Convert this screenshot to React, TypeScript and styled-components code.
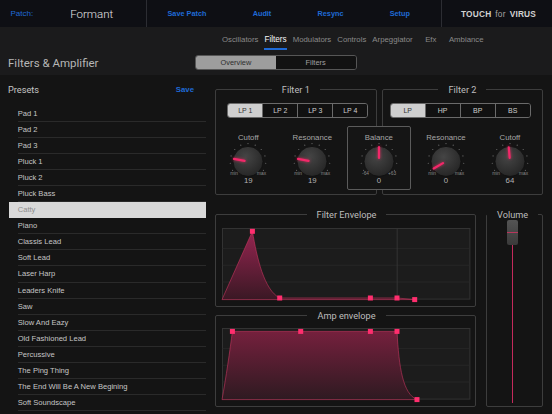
import React, { useId } from 'react';
import styled, { createGlobalStyle } from 'styled-components';

const BLUE = '#1f6ad6';
const PINK = '#f2286a';

const GlobalStyle = createGlobalStyle`
  html, body {
    margin: 0;
    padding: 0;
    background: #141414;
  }
  body {
    width: 552px;
    height: 414px;
    overflow: hidden;
    font-family: 'Liberation Sans', Arial, sans-serif;
  }
  * {
    box-sizing: border-box;
  }
`;

const Screen = styled.div`
  width: 552px;
  height: 414px;
  display: flex;
  flex-direction: column;
  background: #141414;
  overflow: hidden;
`;

const TopBar = styled.header`
  height: 27px;
  flex: none;
  display: flex;
  background: #0e0f14;
`;

const PatchCell = styled.div`
  width: 147px;
  display: flex;
  align-items: center;
  padding-left: 10.5px;
  border-right: 1px solid #2c2d33;
`;

const PatchLabel = styled.span`
  color: ${BLUE};
  font-size: 8px;
`;

const PatchName = styled.span`
  margin-left: 37px;
  color: #e4e4e4;
  font-family: Roboto, 'Liberation Sans', sans-serif;
  font-weight: 300;
  font-size: 11.5px;
`;

const NavCell = styled.nav`
  width: 295px;
  display: flex;
  align-items: center;
  justify-content: space-between;
  padding: 0 31px 0 20.5px;
  border-right: 1px solid #2c2d33;
`;

const NavLink = styled.span`
  color: ${BLUE};
  font-size: 7.3px;
  font-weight: 700;
`;

const LogoCell = styled.div`
  flex: 1;
  display: flex;
  align-items: center;
  padding-left: 19px;
  color: #d2d2d2;
  font-size: 8.3px;
  letter-spacing: 0.2px;
`;

const LogoWord = styled.b`
  font-weight: 700;
`;

const LogoFor = styled.span`
  margin: 0 4px;
  color: #a6a6a6;
`;

const TabBar = styled.div`
  height: 23px;
  flex: none;
  display: flex;
  gap: 6px;
  padding-left: 222px;
  background: #1b1b1c;
`;

const Tab = styled.span<{ $active?: boolean; $spaced?: boolean }>`
  display: flex;
  align-items: center;
  padding-top: 3px;
  margin-left: ${(p) => (p.$spaced ? '6.5px' : '0')};
  border-bottom: 2px solid ${(p) => (p.$active ? BLUE : 'transparent')};
  color: ${(p) => (p.$active ? '#f4f4f4' : '#8a8a8a')};
  font-size: ${(p) => (p.$active ? '8.2px' : '7.8px')};
`;

const HeaderBand = styled.div`
  height: 25px;
  flex: none;
  display: flex;
  align-items: center;
  padding-left: 8px;
  background: #1b1b1c;
`;

const PageTitle = styled.h1`
  width: 187px;
  margin: 0;
  color: #b6b6b6;
  font-family: Roboto, 'Liberation Sans', sans-serif;
  font-weight: 400;
  font-size: 11.5px;
`;

const ViewSwitch = styled.div`
  width: 161.5px;
  height: 15px;
  display: flex;
  border: 1px solid #565656;
  border-radius: 3px;
  overflow: hidden;
`;

const ViewOption = styled.span<{ $active?: boolean }>`
  flex: 1;
  display: flex;
  align-items: center;
  justify-content: center;
  background: ${(p) => (p.$active ? '#9d9d9d' : '#121212')};
  color: ${(p) => (p.$active ? '#2e2e2e' : '#a0a0a0')};
  font-size: 7.4px;
`;

const Body = styled.div`
  flex: 1;
  min-height: 0;
  display: flex;
`;

const PresetsColumn = styled.section`
  width: 210px;
  flex: none;
  display: flex;
  flex-direction: column;
`;

const PresetsHeader = styled.div`
  height: 30.5px;
  flex: none;
  display: flex;
  align-items: center;
  justify-content: space-between;
  padding: 0 16px 2px 8px;
`;

const PresetsTitle = styled.span`
  color: #c4c4c4;
  font-family: Roboto, 'Liberation Sans', sans-serif;
  font-size: 9.2px;
`;

const SaveLink = styled.span`
  color: ${BLUE};
  font-size: 7.8px;
  font-weight: 700;
`;

const PresetList = styled.ul`
  list-style: none;
  margin: 0 0 0 9.3px;
  padding: 0;
  width: 196.4px;
`;

const PresetRow = styled.li<{ $selected?: boolean }>`
  display: flex;
  padding-left: 8.4px;
  background: ${(p) => (p.$selected ? '#d9d9d9' : 'transparent')};
`;

const PresetName = styled.span<{ $selected?: boolean }>`
  flex: 1;
  height: 16.1px;
  line-height: 15.6px;
  border-bottom: 1px solid ${(p) => (p.$selected ? 'transparent' : '#2a2a2a')};
  color: ${(p) => (p.$selected ? '#8e8e8e' : '#c6c6c6')};
  font-size: 7.6px;
  white-space: nowrap;
`;

const Editor = styled.section`
  flex: 1;
  display: flex;
  flex-direction: column;
  padding: 8.5px 8.7px 0 5px;
`;

const FilterRow = styled.div`
  position: relative;
  display: grid;
  grid-template-columns: 1fr 1fr;
  gap: 5px;
`;

const Group = styled.fieldset<{ $pad?: string }>`
  margin: 0;
  min-width: 0;
  padding: ${(p) => p.$pad || '0'};
  border: 1px solid #3d3d3d;
  border-radius: 2px;
`;

const Legend = styled.legend`
  margin: 0 auto;
  padding: 0 10px;
  color: #bdbdbd;
  font-family: Roboto, 'Liberation Sans', sans-serif;
  font-size: 9.2px;
  line-height: 11px;
`;

const ModeBar = styled.div<{ $left: number; $right: number }>`
  height: 15.6px;
  display: flex;
  margin: 8.2px ${(p) => p.$right}px 0 ${(p) => p.$left}px;
  border: 1px solid #6a6a6a;
  border-radius: 3px;
  overflow: hidden;
`;

const ModeButton = styled.span<{ $active?: boolean }>`
  flex: 1;
  display: flex;
  align-items: center;
  justify-content: center;
  background: ${(p) => (p.$active ? '#cfcfcf' : '#111111')};
  color: ${(p) => (p.$active ? '#333333' : '#cdcdcd')};
  font-size: 7px;
  & + & {
    border-left: 1px solid #6a6a6a;
  }
`;

const KnobRow = styled.div<{ $offset: number }>`
  display: flex;
  margin-top: 15px;
  padding: 0 0 8.7px ${(p) => p.$offset}px;
`;

const KnobCell = styled.div`
  width: 64px;
  display: flex;
  flex-direction: column;
  align-items: center;
`;

const KnobLabel = styled.span`
  height: 10px;
  line-height: 10px;
  color: #a6a6a6;
  font-size: 7.8px;
`;

const KnobValue = styled.span`
  height: 8px;
  line-height: 8px;
  color: #b2b2b2;
  font-size: 7.8px;
`;

const DialSvg = styled.svg`
  display: block;
  overflow: visible;
`;

const Pointer = styled.line`
  filter: drop-shadow(0 0 1.4px rgba(255, 40, 100, 0.75));
`;

const BalanceBox = styled.div`
  position: absolute;
  left: 131.7px;
  top: 42.5px;
  width: 64.3px;
  height: 64px;
  display: flex;
  justify-content: center;
  padding-top: 6.3px;
  border: 1px solid #5b5b5b;
  border-radius: 2px;
  background: #151515;
`;

const LowerRow = styled.div`
  display: flex;
  gap: 10px;
  margin-top: 14.2px;
`;

const EnvColumn = styled.div`
  width: 261px;
  display: flex;
  flex-direction: column;
  gap: 2.8px;
`;

const GraphSvg = styled.svg`
  display: block;
  overflow: visible;
`;

const VolumeGroup = styled(Group)`
  width: 57.3px;
  display: flex;
  flex-direction: column;
  align-items: center;
  padding: 0 4px 2.7px 0;
`;

const Handle = styled.div`
  width: 11.4px;
  height: 25.3px;
  flex: none;
  display: flex;
  align-items: center;
  border-radius: 2px;
  background: linear-gradient(#545454, #3a3a3a);
  &::after {
    content: '';
    width: 100%;
    height: 1.2px;
    background: #b8365c;
  }
`;

const Track = styled.div`
  width: 1.6px;
  flex: 1;
  background: #c42a5c;
`;

type DialProps = { angle: number; min?: string; max?: string };

function Dial({ angle, min = 'min', max = 'max' }: DialProps) {
  const gid = useId().replace(/:/g, '');
  const cx = 32;
  const cy = 18.4;
  const rad = ((angle - 90) * Math.PI) / 180;
  const ticks = Array.from({ length: 11 }, (_, i) => -120 + i * 24);
  return (
    <DialSvg width={64} height={34} viewBox="0 0 64 34">
      <defs>
        <radialGradient id={gid} cx="42%" cy="35%" r="70%">
          <stop offset="0%" stopColor="#454545" />
          <stop offset="100%" stopColor="#242424" />
        </radialGradient>
      </defs>
      {ticks.map((t) => {
        const a = ((t - 90) * Math.PI) / 180;
        return <circle key={t} cx={cx + Math.cos(a) * 17.8} cy={cy + Math.sin(a) * 17.8} r={0.6} fill="#6c6c6c" />;
      })}
      <circle cx={cx} cy={cy} r={15} fill={`url(#${gid})`} stroke="#0e0e0e" strokeWidth={0.8} />
      <Pointer
        x1={cx + Math.cos(rad) * 3.5}
        y1={cy + Math.sin(rad) * 3.5}
        x2={cx + Math.cos(rad) * 14.2}
        y2={cy + Math.sin(rad) * 14.2}
        stroke={PINK}
        strokeWidth={2.2}
        strokeLinecap="round"
      />
      <text x={cx - 10} y={32.4} textAnchor="end" fontSize={4.8} fill="#8a8a8a" fontFamily="Liberation Sans, sans-serif">
        {min}
      </text>
      <text x={cx + 9} y={32.4} textAnchor="start" fontSize={4.8} fill="#8a8a8a" fontFamily="Liberation Sans, sans-serif">
        {max}
      </text>
    </DialSvg>
  );
}

type KnobProps = DialProps & { label: string; value: string };

function Knob({ label, value, ...dial }: KnobProps) {
  return (
    <KnobCell>
      <KnobLabel>{label}</KnobLabel>
      <Dial {...dial} />
      <KnobValue>{value}</KnobValue>
    </KnobCell>
  );
}

type EnvelopeProps = { path: string; points: [number, number][]; top: string; bottom: string };

const GW = 248.4;
const GH = 71.6;

function EnvelopeGraph({ path, points, top, bottom }: EnvelopeProps) {
  const gid = useId().replace(/:/g, '');
  return (
    <GraphSvg width={GW} height={GH} viewBox={`0 0 ${GW} ${GH}`}>
      <defs>
        <linearGradient id={gid} x1="0" y1="0" x2="0" y2="1">
          <stop offset="0%" stopColor={top} />
          <stop offset="100%" stopColor={bottom} />
        </linearGradient>
      </defs>
      <rect x={0.5} y={0.5} width={GW - 1} height={GH - 1} fill="#1c1c1c" stroke="#333333" />
      {[20.6, 37.3, 54].map((y) => (
        <line key={y} x1={0.5} x2={GW - 0.5} y1={y} y2={y} stroke="#2a2a2a" strokeWidth={0.8} />
      ))}
      <line x1={175.2} x2={175.2} y1={0.5} y2={GH - 0.5} stroke="#3a3a3a" strokeWidth={0.8} />
      <path d={path} fill={`url(#${gid})`} stroke="#c8345f" strokeWidth={0.7} strokeOpacity={0.85} />
      {points.map(([x, y]) => (
        <rect key={`${x}-${y}`} x={x - 2.5} y={y - 2.5} width={5} height={5} fill="#ff2e6e" />
      ))}
    </GraphSvg>
  );
}

const presets = [
  'Pad 1',
  'Pad 2',
  'Pad 3',
  'Pluck 1',
  'Pluck 2',
  'Pluck Bass',
  'Catty',
  'Piano',
  'Classis Lead',
  'Soft Lead',
  'Laser Harp',
  'Leaders Knife',
  'Saw',
  'Slow And Eazy',
  'Old Fashioned Lead',
  'Percussive',
  'The Ping Thing',
  'The End Will Be A New Begining',
  'Soft Soundscape',
];

const tabs = ['Oscillators', 'Filters', 'Modulators', 'Controls', 'Arpeggiator', 'Efx', 'Ambiance'];

export default function App() {
  return (
    <>
      <GlobalStyle />
      <Screen>
        <TopBar>
          <PatchCell>
            <PatchLabel>Patch:</PatchLabel>
            <PatchName>Formant</PatchName>
          </PatchCell>
          <NavCell>
            {['Save Patch', 'Audit', 'Resync', 'Setup'].map((n) => (
              <NavLink key={n}>{n}</NavLink>
            ))}
          </NavCell>
          <LogoCell>
            <LogoWord>TOUCH</LogoWord>
            <LogoFor>for</LogoFor>
            <LogoWord>VIRUS</LogoWord>
          </LogoCell>
        </TopBar>

        <TabBar>
          {tabs.map((t) => (
            <Tab key={t} $active={t === 'Filters'} $spaced={t === 'Efx' || t === 'Ambiance'}>
              {t}
            </Tab>
          ))}
        </TabBar>

        <HeaderBand>
          <PageTitle>Filters &amp; Amplifier</PageTitle>
          <ViewSwitch>
            <ViewOption $active>Overview</ViewOption>
            <ViewOption>Filters</ViewOption>
          </ViewSwitch>
        </HeaderBand>

        <Body>
          <PresetsColumn>
            <PresetsHeader>
              <PresetsTitle>Presets</PresetsTitle>
              <SaveLink>Save</SaveLink>
            </PresetsHeader>
            <PresetList>
              {presets.map((p) => (
                <PresetRow key={p} $selected={p === 'Catty'}>
                  <PresetName $selected={p === 'Catty'}>{p}</PresetName>
                </PresetRow>
              ))}
            </PresetList>
          </PresetsColumn>

          <Editor>
            <FilterRow>
              <Group>
                <Legend>Filter 1</Legend>
                <ModeBar $left={11.3} $right={7.4}>
                  {['LP 1', 'LP 2', 'LP 3', 'LP 4'].map((m, i) => (
                    <ModeButton key={m} $active={i === 0}>
                      {m}
                    </ModeButton>
                  ))}
                </ModeBar>
                <KnobRow $offset={0.3}>
                  <Knob label="Cutoff" value="19" angle={-80} />
                  <Knob label="Resonance" value="19" angle={-80} />
                </KnobRow>
              </Group>
              <Group>
                <Legend>Filter 2</Legend>
                <ModeBar $left={7} $right={11.6}>
                  {['LP', 'HP', 'BP', 'BS'].map((m, i) => (
                    <ModeButton key={m} $active={i === 0}>
                      {m}
                    </ModeButton>
                  ))}
                </ModeBar>
                <KnobRow $offset={31.3}>
                  <Knob label="Resonance" value="0" angle={-120} />
                  <Knob label="Cutoff" value="64" angle={-5} />
                </KnobRow>
              </Group>
              <BalanceBox>
                <Knob label="Balance" value="0" angle={0} min="-64" max="+63" />
              </BalanceBox>
            </FilterRow>

            <LowerRow>
              <EnvColumn>
                <Group $pad="7.6px 4.3px 6.4px 6.3px">
                  <Legend>Filter Envelope</Legend>
                  <EnvelopeGraph
                    path="M0 71.6 L30.4 3.3 C35 30 42 62 57.7 70 L175 70 L192.7 71.6 Z"
                    points={[
                      [30.4, 3.3],
                      [57.7, 70],
                      [148.4, 70],
                      [175, 70],
                      [192.7, 71.6],
                    ]}
                    top="#952550"
                    bottom="#3a1824"
                  />
                </Group>
                <Group $pad="7.6px 4.3px 6.4px 6.3px">
                  <Legend>Amp envelope</Legend>
                  <EnvelopeGraph
                    path="M0 71.6 C4 50 8 22 10.4 3.4 L175 3.4 C177 40 181 66 195 71.6 Z"
                    points={[
                      [10.4, 3.4],
                      [78.7, 3.4],
                      [148.4, 3.4],
                      [175, 3.4],
                      [195, 71.6],
                    ]}
                    top="#75203d"
                    bottom="#2e1a21"
                  />
                </Group>
              </EnvColumn>
              <VolumeGroup>
                <Legend>Volume</Legend>
                <Handle />
                <Track />
              </VolumeGroup>
            </LowerRow>
          </Editor>
        </Body>
      </Screen>
    </>
  );
}
